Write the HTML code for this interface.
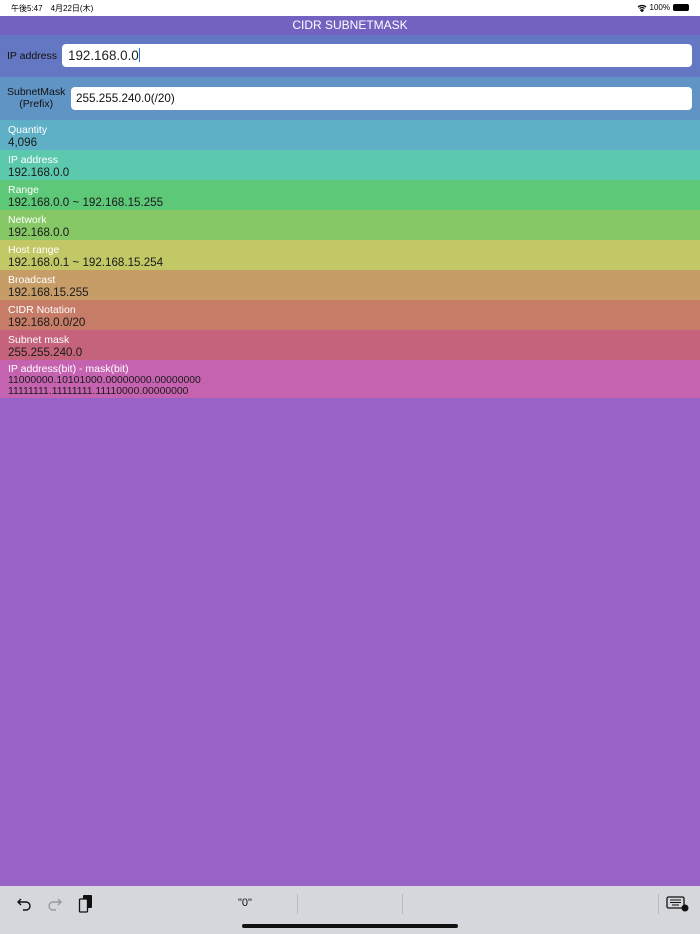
<!DOCTYPE html>
<html><head><meta charset="utf-8"><style>
*{margin:0;padding:0;box-sizing:border-box}
body{width:700px;height:934px;overflow:hidden;background:#9862c6;font-family:"Liberation Sans","Noto Sans CJK JP",sans-serif;position:relative}
.sb{height:16px;background:#fff;font-size:8px;position:relative}
.sb .l{position:absolute;left:11px;top:3px}
.sb .r{position:absolute;right:11px;top:3px;display:flex;align-items:center;gap:3px}
.title{height:19px;background:#7462c1;color:#fff;text-align:center;font-size:12px;line-height:19px}
.ip{height:42px;background:#6477c3;position:relative}
.sm{height:43px;background:#6094c5;position:relative}
.lab{position:absolute;font-size:10.5px;color:#111;text-align:center}
.inp{position:absolute;background:#fff;border-radius:4px}
.row{height:30px;padding:4px 0 0 8px;color:#fff;font-size:10.5px;line-height:12px}
.row div{color:#1a1a1a;font-size:11.6px;line-height:13px}
.kb{position:absolute;left:0;top:886px;width:700px;height:48px;background:#d6d7dc}
</style></head><body>
<div class="sb"><span class="l">午後5:47　4月22日(木)</span><span class="r">
<svg width="10" height="8" viewBox="0 0 10 8"><path d="M1 3a6 6 0 0 1 8 0M2.5 4.5a4 4 0 0 1 5 0M5 7.5l-1.2-1.3a1.7 1.7 0 0 1 2.4 0z" stroke="#000" stroke-width="1.2" fill="none"/></svg>100%<span style="display:inline-block;width:16px;height:7px;background:#000;border-radius:2px"></span></span></div>
<div class="title">CIDR SUBNETMASK</div>
<div class="ip"><span class="lab" style="left:7px;top:15px">IP address</span>
<div class="inp" style="left:62px;top:9px;width:630px;height:23px;font-size:13.4px;line-height:23px;padding-left:6px;color:#222">192.168.0.0<span style="display:inline-block;width:1.5px;height:14px;background:#1a73e8;vertical-align:-2px"></span></div></div>
<div class="sm"><span class="lab" style="left:7px;top:9px;line-height:12px">SubnetMask<br>(Prefix)</span>
<div class="inp" style="left:71px;top:10px;width:621px;height:23px;font-size:11.7px;line-height:23px;padding-left:5px;color:#111">255.255.240.0(/20)</div></div>
<div class="row" style="background:#5fb0c6">Quantity<div>4,096</div></div>
<div class="row" style="background:#5cc8ae">IP address<div>192.168.0.0</div></div>
<div class="row" style="background:#5dc878">Range<div>192.168.0.0 ~ 192.168.15.255</div></div>
<div class="row" style="background:#87c866">Network<div>192.168.0.0</div></div>
<div class="row" style="background:#c2c866">Host range<div>192.168.0.1 ~ 192.168.15.254</div></div>
<div class="row" style="background:#c69c67">Broadcast<div>192.168.15.255</div></div>
<div class="row" style="background:#c67c67">CIDR Notation<div>192.168.0.0/20</div></div>
<div class="row" style="background:#c6637c">Subnet mask<div>255.255.240.0</div></div>
<div class="row" style="background:#c663b1;height:38px;padding-top:3px">IP address(bit) - mask(bit)<div style="font-size:10.4px;line-height:11px">11000000.10101000.00000000.00000000<br>11111111.11111111.11110000.00000000</div></div>
<div class="kb">
<svg style="position:absolute;left:16px;top:10px" width="16" height="16" viewBox="0 0 16 16"><path d="M5 3L2 6l3 3M2 6h8a4 4 0 0 1 0 8H7" stroke="#111" stroke-width="1.4" fill="none"/></svg>
<svg style="position:absolute;left:47px;top:10px" width="16" height="16" viewBox="0 0 16 16"><path d="M11 3l3 3-3 3M14 6H6a4 4 0 0 0 0 8h3" stroke="#999" stroke-width="1.4" fill="none"/></svg>
<svg style="position:absolute;left:78px;top:8px" width="16" height="20" viewBox="0 0 16 20"><rect x="5" y="1" width="9" height="13" rx="1" fill="#111"/><rect x="1.5" y="5" width="8" height="13" rx="1" fill="#d6d7dc" stroke="#111" stroke-width="1.3"/></svg>
<span style="position:absolute;left:238px;top:11px;font-size:11px;color:#111">"0"</span>
<div style="position:absolute;left:297px;top:8px;width:1px;height:20px;background:#bbb"></div>
<div style="position:absolute;left:402px;top:8px;width:1px;height:20px;background:#bbb"></div>
<div style="position:absolute;left:658px;top:8px;width:1px;height:20px;background:#bbb"></div>
<svg style="position:absolute;left:666px;top:10px" width="24" height="16" viewBox="0 0 24 16"><rect x="1" y="1" width="17" height="11" rx="1.5" fill="none" stroke="#111" stroke-width="1.3"/><path d="M4 4h11M4 6.5h11M6 9h7" stroke="#111" stroke-width="1"/><circle cx="19" cy="12" r="3.5" fill="#111"/></svg>
<div style="position:absolute;left:242px;top:38px;width:216px;height:4px;border-radius:2px;background:#111"></div>
</div>
</body></html>
